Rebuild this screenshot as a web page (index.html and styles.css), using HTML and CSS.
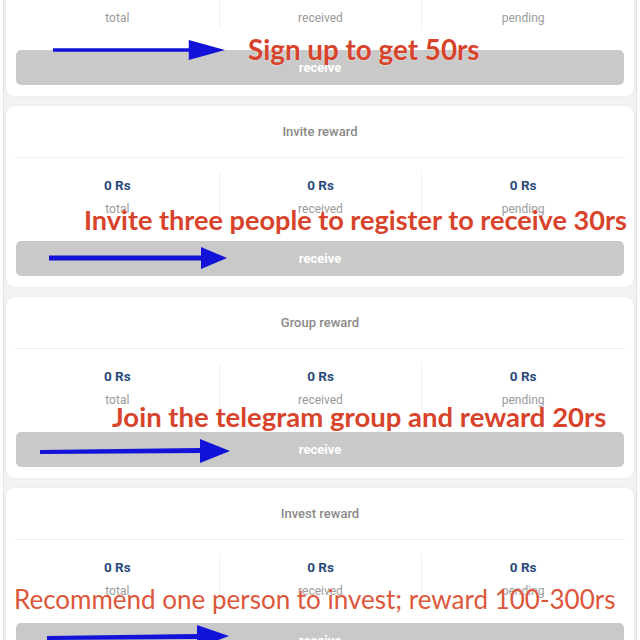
FILE: index.html
```html
<!DOCTYPE html>
<html>
<head>
<meta charset="utf-8">
<link rel="stylesheet" href="styles.css">
</head>
<body>
<div class="page">
  <div class="card card-first">
    <div class="title">Sign up reward</div>
    <div class="stats">
      <div class="stat"><div class="value faint">0 Rs</div><div class="label">total</div></div>
      <div class="stat"><div class="value faint">0 Rs</div><div class="label">received</div></div>
      <div class="stat"><div class="value faint">0 Rs</div><div class="label">pending</div></div>
    </div>
    <div class="btn">receive</div>
    <svg class="arrow arrow-1" width="172" height="26" viewBox="0 0 190 26"><path d="M0 11 L150 11 L150 2 L190 13 L150 24 L150 15 L0 15 Z" fill="#1212d8"/></svg>
    <div class="note note-1">Sign up to get 50rs</div>
  </div>

  <div class="card">
    <div class="title">Invite reward</div>
    <div class="stats">
      <div class="stat"><div class="value">0 Rs</div><div class="label">total</div></div>
      <div class="stat"><div class="value">0 Rs</div><div class="label">received</div></div>
      <div class="stat"><div class="value">0 Rs</div><div class="label">pending</div></div>
    </div>
    <div class="btn">receive</div>
    <svg class="arrow arrow-2" width="180" height="24" viewBox="0 0 180 24"><path d="M0 9.5 L152 9.5 L152 1 L178 12 L152 23 L152 14.5 L0 14.5 Z" fill="#1212d8"/></svg>
    <div class="note note-2">Invite three people to register to receive 30rs</div>
  </div>

  <div class="card">
    <div class="title">Group reward</div>
    <div class="stats">
      <div class="stat"><div class="value">0 Rs</div><div class="label">total</div></div>
      <div class="stat"><div class="value">0 Rs</div><div class="label">received</div></div>
      <div class="stat"><div class="value">0 Rs</div><div class="label">pending</div></div>
    </div>
    <div class="btn">receive</div>
    <svg class="arrow arrow-3" width="192" height="26" viewBox="0 0 192 26"><path d="M0 12 L160 10 L160 1 L190 13 L160 25 L160 15 L0 16 Z" fill="#1212d8"/></svg>
    <div class="note note-3">Join the telegram group and reward 20rs</div>
  </div>

  <div class="card">
    <div class="title">Invest reward</div>
    <div class="stats">
      <div class="stat"><div class="value">0 Rs</div><div class="label">total</div></div>
      <div class="stat"><div class="value">0 Rs</div><div class="label">received</div></div>
      <div class="stat"><div class="value">0 Rs</div><div class="label">pending</div></div>
    </div>
    <div class="btn">receive</div>
    <svg class="arrow arrow-4" width="184" height="26" viewBox="0 0 184 26"><path d="M0 12 L150 10 L150 1 L182 12 L150 24 L150 15 L0 16 Z" fill="#1212d8"/></svg>
    <div class="note note-4">Recommend one person to invest; reward 100-300rs</div>
  </div>
</div>
</body>
</html>
```

FILE: styles.css
```css
html, body {
  margin: 0;
  padding: 0;
  background: #ffffff;
}

body {
  font-family: Roboto, "Liberation Sans", Arial, sans-serif;
  overflow: hidden;
}

.page {
  margin: 0 3px;
  border-left: 1px solid #e3e3e3;
  border-right: 1px solid #e3e3e3;
  background: #f3f3f3;
  padding: 0 2px;
  margin-top: -85px;
  min-height: 800px;
}

.card {
  position: relative;
  background: #ffffff;
  border-radius: 9px;
  padding: 0 10px 11px;
  margin-bottom: 10px;
  box-shadow: 0 0 3px rgba(0, 0, 0, 0.06);
}

.title {
  height: 51px;
  line-height: 51px;
  text-align: center;
  font-size: 13px;
  font-weight: 500;
  color: #8a8a8a;
  border-bottom: 1px solid #f0f0f0;
  margin: 0 -2px;
}

.stats {
  display: grid;
  grid-template-columns: 1fr 1fr 1fr;
  padding-top: 14px;
}

.stat {
  height: 48px;
  text-align: center;
  border-left: 1px solid #f0f0f0;
}

.stat:first-child {
  border-left: none;
}

.value {
  line-height: 26px;
  font-size: 13.5px;
  font-weight: 700;
  color: #2a4a7c;
}

.value.faint {
  color: #b9d3e6;
}

.label {
  line-height: 22px;
  font-size: 12px;
  color: #9a9a9a;
}

.btn {
  margin-top: 21px;
  height: 35px;
  line-height: 35px;
  border-radius: 5px;
  background: #c9c9c9;
  color: #ffffff;
  text-align: center;
  font-size: 13px;
  font-weight: 700;
}

.arrow {
  position: absolute;
}

.arrow-1 { left: 47px; top: 122px; }
.arrow-2 { left: 43px; top: 140px; }
.arrow-3 { left: 34px; top: 141px; }
.arrow-4 { left: 41px; top: 136px; }

.note {
  position: absolute;
  white-space: nowrap;
  font-family: Lato, "Open Sans", sans-serif;
  font-weight: 700;
  color: #d8432b;
  line-height: 30px;
  text-shadow: 0 0 2px rgba(255, 255, 255, 0.8);
}

.note-1 { left: 242px; top: 120px; font-size: 27.8px; }
.note-2 { left: 78px; top: 99px; font-size: 27.1px; }
.note-3 { left: 106px; top: 105px; font-size: 27.5px; }
.note-4 {
  left: 8px;
  top: 96px;
  font-size: 26px;
  font-weight: 400;
  color: #dc573b;
}
```
